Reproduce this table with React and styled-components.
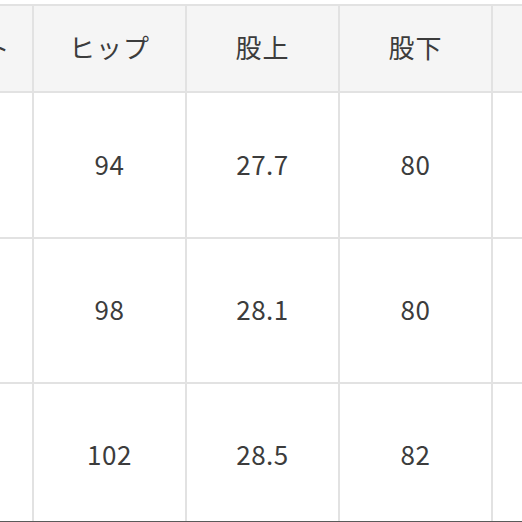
import React from 'react';
import styled, { createGlobalStyle } from 'styled-components';

const GlobalStyle = createGlobalStyle`
  html, body {
    margin: 0;
    padding: 0;
    background: #fff;
  }
  body {
    font-family: "Noto Sans CJK JP", "Noto Sans", sans-serif;
    color: #3c3c3c;
  }
`;

const Frame = styled.div`
  width: 522px;
  height: 522px;
  overflow: hidden;
  box-sizing: border-box;
  padding-top: 4px;
  border-bottom: 1px solid #5a5a5a;
`;

const Table = styled.table`
  border-collapse: collapse;
  table-layout: fixed;
  width: 767px;
  margin-left: -121px;
`;

const Col = styled.col`
  width: 153px;
`;

const Row = styled.tr`
  height: ${(p) => p.$h}px;
`;

const Head = styled.th`
  background: #f5f5f5;
  border: 2px solid #e2e2e2;
  font-weight: 400;
  font-size: 26px;
  letter-spacing: 1px;
  text-align: center;
  vertical-align: middle;
  padding: 0 0 4px;
  white-space: nowrap;
`;

const Cell = styled.td`
  border: 2px solid #e2e2e2;
  font-size: 26px;
  letter-spacing: 0.5px;
  text-align: center;
  vertical-align: middle;
  padding: 0 0 4px;
`;

const headers = ['ウエスト', 'ヒップ', '股上', '股下', '裾幅'];
const rows = [
  ['70', '94', '27.7', '80', '19'],
  ['74', '98', '28.1', '80', '19.5'],
  ['78', '102', '28.5', '82', '20'],
];

export default function App() {
  return (
    <>
      <GlobalStyle />
      <Frame>
        <Table>
          <colgroup>
            {headers.map((h) => (
              <Col key={h} />
            ))}
          </colgroup>
          <thead>
            <Row $h={87}>
              {headers.map((h) => (
                <Head key={h}>{h}</Head>
              ))}
            </Row>
          </thead>
          <tbody>
            {rows.map((r, i) => (
              <Row key={i} $h={i === 0 ? 146 : 145}>
                {r.map((v, j) => (
                  <Cell key={j}>{v}</Cell>
                ))}
              </Row>
            ))}
          </tbody>
        </Table>
      </Frame>
    </>
  );
}
